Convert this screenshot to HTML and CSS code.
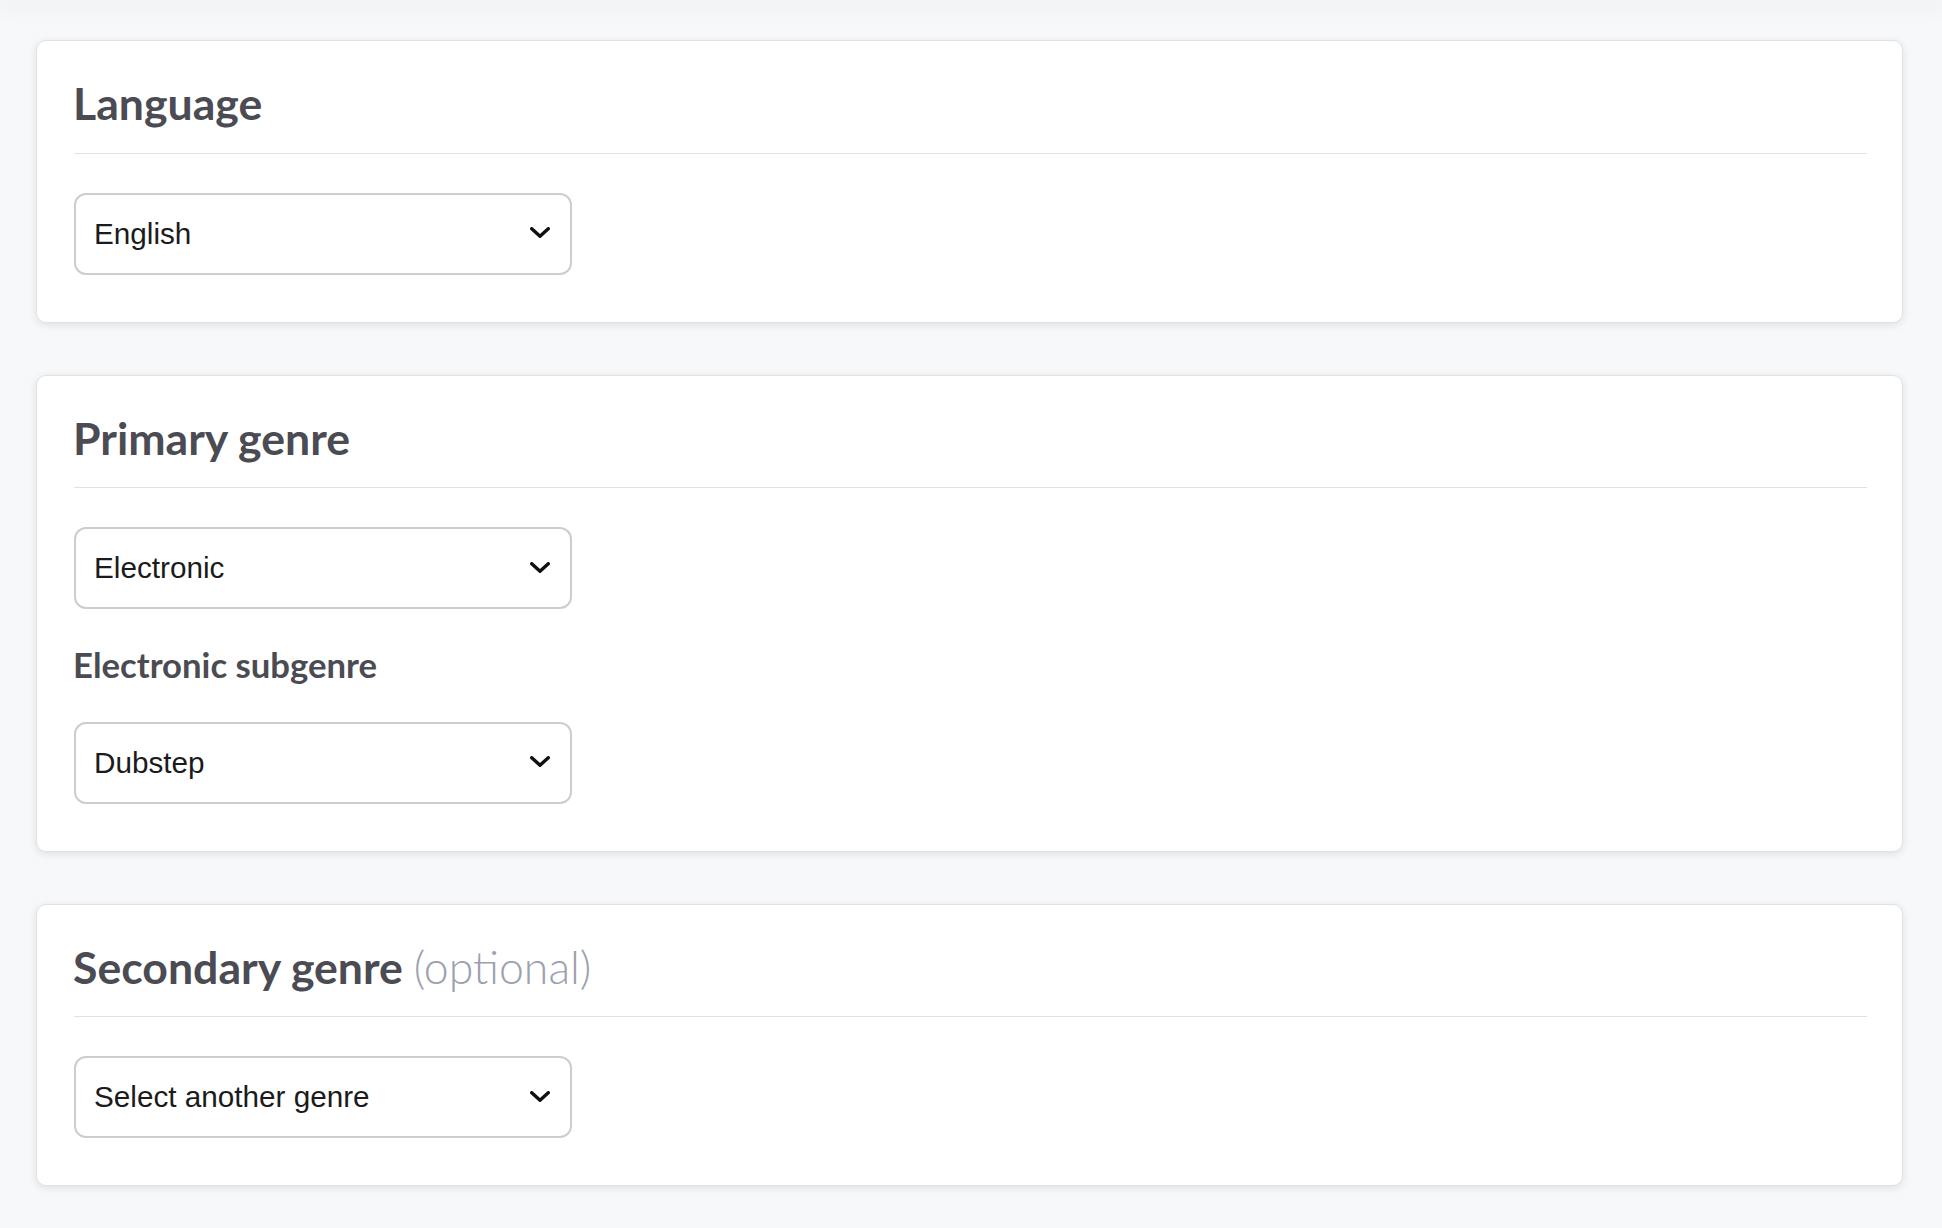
FILE: index.html
```html
<!DOCTYPE html>
<html lang="en">
<head>
<meta charset="utf-8">
<title>Genre settings</title>
<link rel="stylesheet" href="styles.css">
</head>
<body>
<div class="topbar"></div>
<main class="page">
  <section class="card">
    <h2 class="card-title">Language</h2>
    <div class="select"><span class="select-value">English</span>
      <svg class="chev" viewBox="0 0 20 11" width="20" height="11"><polyline points="1.75,1.75 10,9.25 18.25,1.75" fill="none" stroke="#111" stroke-width="3.4" stroke-linecap="round" stroke-linejoin="miter"/></svg>
    </div>
  </section>

  <section class="card">
    <h2 class="card-title">Primary genre</h2>
    <div class="select"><span class="select-value">Electronic</span>
      <svg class="chev" viewBox="0 0 20 11" width="20" height="11"><polyline points="1.75,1.75 10,9.25 18.25,1.75" fill="none" stroke="#111" stroke-width="3.4" stroke-linecap="round" stroke-linejoin="miter"/></svg>
    </div>
    <h3 class="sub-label">Electronic subgenre</h3>
    <div class="select"><span class="select-value">Dubstep</span>
      <svg class="chev" viewBox="0 0 20 11" width="20" height="11"><polyline points="1.75,1.75 10,9.25 18.25,1.75" fill="none" stroke="#111" stroke-width="3.4" stroke-linecap="round" stroke-linejoin="miter"/></svg>
    </div>
  </section>

  <section class="card">
    <h2 class="card-title">Secondary genre <span class="optional">(optional)</span></h2>
    <div class="select"><span class="select-value">Select another genre</span>
      <svg class="chev" viewBox="0 0 20 11" width="20" height="11"><polyline points="1.75,1.75 10,9.25 18.25,1.75" fill="none" stroke="#111" stroke-width="3.4" stroke-linecap="round" stroke-linejoin="miter"/></svg>
    </div>
  </section>
</main>
</body>
</html>
```

FILE: styles.css
```css
html, body {
  margin: 0;
  padding: 0;
}
body {
  background: #f7f8fa;
  font-family: Lato, "Liberation Sans", Arial, sans-serif;
  min-height: 1228px;
}
.topbar {
  height: 0;
  box-shadow: 0 0 24px 6px rgba(0, 0, 0, 0.05);
}
.page {
  padding: 40px 39px 40px 36px;
  display: flex;
  flex-direction: column;
  gap: 52px;
}
.card {
  background: #ffffff;
  border: 1px solid #e2e2e5;
  border-radius: 10px;
  box-shadow: 0 2px 8px rgba(0, 0, 0, 0.1);
  padding: 35px 35px 47px 37px;
}
.card-title {
  margin: 0 0 39px -1px;
  font-family: Lato, "Liberation Sans", sans-serif;
  font-weight: 700;
  font-size: 44.6px;
  line-height: 1.2;
  color: #4b4b53;
}
.card-title::after {
  content: "";
  display: block;
  height: 1px;
  background: #e2e2e6;
  margin-top: 23px;
  margin-left: 1px;
}
.optional {
  font-weight: 300;
  color: #9ba1ae;
}
.sub-label {
  margin: 35px 0 36px -1px;
  font-family: Lato, "Liberation Sans", sans-serif;
  font-weight: 700;
  font-size: 34.7px;
  line-height: 1.2;
  color: #4b4b53;
}
.select {
  box-sizing: border-box;
  width: 498px;
  height: 82px;
  border: 2px solid #cdcdcd;
  border-radius: 12px;
  background: #fff;
  display: flex;
  align-items: center;
  justify-content: space-between;
  padding: 0 20px 0 18px;
}
.select-value {
  font-family: "Liberation Sans", Arial, sans-serif;
  font-size: 29.7px;
  color: #1b1b1b;
}
.chev {
  display: block;
  flex: none;
  transform: translateY(-1px);
}
```
